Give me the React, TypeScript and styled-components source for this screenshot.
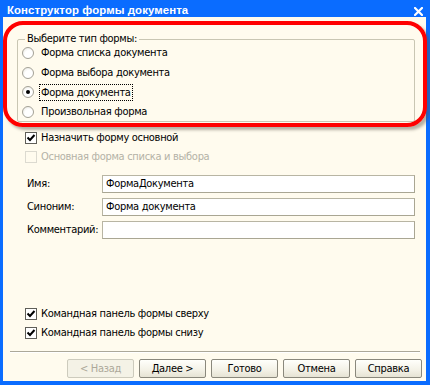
import React from "react";
import styled, { createGlobalStyle } from "styled-components";

const Global = createGlobalStyle`
  html, body { margin: 0; padding: 0; background: #ffffff; }
  body { font-family: "DejaVu Sans Condensed", "DejaVu Sans", sans-serif; font-size: 11px; letter-spacing: -0.3px; color: #000; }
  * { box-sizing: border-box; }
`;

const Window = styled.div`
  position: relative;
  width: 430px;
  height: 385px;
  background: #0a6cff;
  display: flex;
  flex-direction: column;
`;

const TitleBar = styled.div`
  height: 17px;
  flex: none;
  display: flex;
  align-items: flex-start;
  justify-content: space-between;
  padding: 4px 7px 0 7px;
`;

const Title = styled.div`
  color: #fff;
  font-family: "Liberation Sans", Arial, sans-serif;
  font-weight: bold;
  font-size: 11.4px;
  line-height: 13px;
  letter-spacing: 0.1px;
`;

const CloseIcon = styled.svg`
  display: block;
  margin-top: 3px;
`;

const Body = styled.div`
  flex: 1;
  margin: 0 4px 4px 3px;
  background: #fffbee;
  display: flex;
  flex-direction: column;
  padding-bottom: 3px;
`;

const Group = styled.div`
  margin: 22px 11px 0 14px;
  height: 83px;
  border: 1px solid #c9c6b3;
  border-radius: 2px;
  display: flex;
  flex-direction: column;
  align-items: flex-start;
`;

const GroupTitle = styled.div`
  margin: -8px 0 -3px 7px;
  padding: 0 2px;
  background: #fffbee;
  line-height: 14px;
`;

const RadioRow = styled.div`
  height: 19.7px;
  flex: none;
  display: flex;
  align-items: center;
  padding-left: 4px;
`;

const RadioCircle = styled.span<{ $on?: boolean }>`
  width: 12px;
  height: 12px;
  border-radius: 50%;
  border: 1px solid #a3a196;
  background: radial-gradient(circle at 60% 65%, #ffffff 45%, #e4e2d8 100%);
  display: flex;
  align-items: center;
  justify-content: center;
  flex: none;
  &::after {
    content: "";
    width: 4px;
    height: 4px;
    border-radius: 50%;
    background: ${(p) => (p.$on ? "#000" : "transparent")};
  }
`;

const RadioLabel = styled.span<{ $focus?: boolean }>`
  margin-left: 5px;
  padding: 1px 1px;
  border: 1px ${(p) => (p.$focus ? "dotted #000" : "solid transparent")};
  line-height: 13px;
`;

const CheckRow = styled.div<{ $disabled?: boolean }>`
  height: 19px;
  flex: none;
  display: flex;
  align-items: center;
  padding-left: 22px;
  color: ${(p) => (p.$disabled ? "#b4b2a6" : "#000")};
`;

const CheckBox = styled.span<{ $disabled?: boolean }>`
  width: 12px;
  height: 12px;
  flex: none;
  border: 1px solid ${(p) => (p.$disabled ? "#dcdad0" : "#5f5e58")};
  background: ${(p) => (p.$disabled ? "#fffbee" : "#fff")};
  display: flex;
  align-items: center;
  justify-content: center;
`;

const CheckLabel = styled.span`
  margin-left: 4px;
`;

const FirstChecks = styled.div`
  margin-top: 6px;
  display: flex;
  flex-direction: column;
`;

const Fields = styled.div`
  margin: 9px 11px 0 24px;
  display: grid;
  grid-template-columns: 75px 1fr;
  row-gap: 5px;
  align-items: center;
`;

const FieldLabel = styled.span`
  line-height: 18px;
  white-space: nowrap;
`;

const Input = styled.div`
  height: 18px;
  background: #fff;
  border: 1px solid;
  border-color: #b8b5a3 #a9a693 #a9a693 #b8b5a3;
  padding-left: 3px;
  line-height: 16px;
  white-space: nowrap;
`;

const Spacer = styled.div`
  flex: 1;
`;

const Separator = styled.div`
  margin: 9px 6px 0 7px;
  border-top: 1px solid #aca899;
  border-bottom: 1px solid #ffffff;
`;

const Buttons = styled.div`
  margin: 6px 4px 0 0;
  display: flex;
  justify-content: flex-end;
  gap: 5px;
`;

const Button = styled.div<{ $disabled?: boolean }>`
  width: 67px;
  height: 19px;
  border: 1px solid ${(p) => (p.$disabled ? "#cdcbbd" : "#8a887c")};
  border-radius: 2px;
  background: ${(p) =>
    p.$disabled
      ? "#f4f2e6"
      : "linear-gradient(#fffffb, #f3f1e6 60%, #e6e3d4)"};
  color: ${(p) => (p.$disabled ? "#aca899" : "#000")};
  display: flex;
  align-items: center;
  justify-content: center;
  line-height: 17px;
`;

const Annotation = styled.div`
  position: absolute;
  left: 3px;
  top: 21px;
  width: 424px;
  height: 106px;
  border: 4px solid #ff0000;
  border-radius: 20px;
  box-shadow: 3px 3px 3px rgba(90, 85, 70, 0.45);
  pointer-events: none;
`;

const Check = () => (
  <svg width="10" height="10" viewBox="0 0 10 10">
    <polyline points="1.5,4.5 4,7 8.5,2" fill="none" stroke="#000" strokeWidth="2" />
  </svg>
);

const radios = [
  "Форма списка документа",
  "Форма выбора документа",
  "Форма документа",
  "Произвольная форма",
];

export default function App() {
  return (
    <>
      <Global />
      <Window>
        <TitleBar>
          <Title>Конструктор формы документа</Title>
          <CloseIcon width="9" height="9" viewBox="0 0 9 9">
            <path d="M1 1 L8 8 M8 1 L1 8" stroke="#fff" strokeWidth="2.2" strokeLinecap="square" />
          </CloseIcon>
        </TitleBar>
        <Body>
          <Group>
            <GroupTitle>Выберите тип формы:</GroupTitle>
            {radios.map((r, i) => (
              <RadioRow key={r}>
                <RadioCircle $on={i === 2} />
                <RadioLabel $focus={i === 2}>{r}</RadioLabel>
              </RadioRow>
            ))}
          </Group>
          <FirstChecks>
            <CheckRow>
              <CheckBox>
                <Check />
              </CheckBox>
              <CheckLabel>Назначить форму основной</CheckLabel>
            </CheckRow>
            <CheckRow $disabled>
              <CheckBox $disabled />
              <CheckLabel>Основная форма списка и выбора</CheckLabel>
            </CheckRow>
          </FirstChecks>
          <Fields>
            <FieldLabel>Имя:</FieldLabel>
            <Input>ФормаДокумента</Input>
            <FieldLabel>Синоним:</FieldLabel>
            <Input>Форма документа</Input>
            <FieldLabel>Комментарий:</FieldLabel>
            <Input />
          </Fields>
          <Spacer />
          <CheckRow>
            <CheckBox>
              <Check />
            </CheckBox>
            <CheckLabel>Командная панель формы сверху</CheckLabel>
          </CheckRow>
          <CheckRow>
            <CheckBox>
              <Check />
            </CheckBox>
            <CheckLabel>Командная панель формы снизу</CheckLabel>
          </CheckRow>
          <Separator />
          <Buttons>
            <Button $disabled>&lt; Назад</Button>
            <Button>Далее &gt;</Button>
            <Button>Готово</Button>
            <Button>Отмена</Button>
            <Button>Справка</Button>
          </Buttons>
        </Body>
        <Annotation />
      </Window>
    </>
  );
}
